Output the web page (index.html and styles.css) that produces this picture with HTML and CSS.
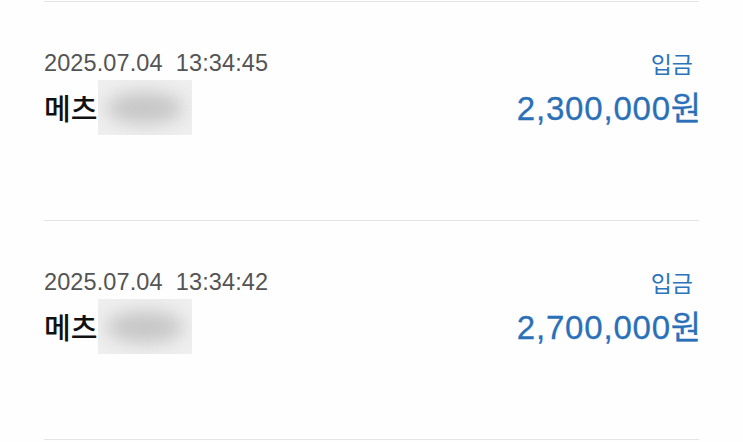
FILE: index.html
```html
<!DOCTYPE html>
<html lang="ko">
<head>
<meta charset="utf-8">
<link rel="stylesheet" href="styles.css">
</head>
<body>
<div class="list">
  <div class="row">
    <div class="left">
      <div class="date">2025.07.04&nbsp;&nbsp;13:34:45</div>
      <div class="name">메츠<span class="blur"><span class="blob"></span></span></div>
    </div>
    <div class="right">
      <div class="type">입금</div>
      <div class="amount">2,300,000원</div>
    </div>
  </div>
  <div class="row">
    <div class="left">
      <div class="date">2025.07.04&nbsp;&nbsp;13:34:42</div>
      <div class="name">메츠<span class="blur"><span class="blob"></span></span></div>
    </div>
    <div class="right">
      <div class="type">입금</div>
      <div class="amount">2,700,000원</div>
    </div>
  </div>
</div>
</body>
</html>
```
FILE: styles.css
```css
html, body {
  margin: 0;
  padding: 0;
  background: #fefefe;
}
body {
  font-family: "Liberation Sans", "Noto Sans CJK KR", sans-serif;
}
.list {
  margin: 1px 44px 0;
  border-top: 1px solid #e4e4e4;
}
.row {
  height: 218px;
  border-bottom: 1px solid #e4e4e4;
  display: flex;
  justify-content: space-between;
  align-items: flex-start;
}
.left, .right {
  padding-top: 47px;
}
.date {
  font-size: 23.5px;
  color: #545454;
  line-height: 28px;
  letter-spacing: 0.1px;
}
.name {
  display: flex;
  align-items: center;
  font-family: "Noto Sans CJK KR", sans-serif;
  font-size: 29px;
  font-weight: 500;
  color: #111;
  line-height: 55px;
  margin-top: 3px;
}
.blur {
  display: inline-block;
  width: 94px;
  height: 55px;
  margin-left: 1px;
  background: #efefef;
  position: relative;
  overflow: hidden;
}
.blob {
  position: absolute;
  left: 8px;
  top: 12px;
  width: 78px;
  height: 32px;
  border-radius: 50%;
  background: #c6c6c6;
  filter: blur(9px);
}
.right {
  text-align: right;
}
.type {
  font-family: "Noto Sans CJK KR", sans-serif;
  font-size: 23px;
  color: #2b74bc;
  line-height: 28px;
  padding-right: 6px;
}
.amount {
  font-size: 33px;
  color: #2a70b8;
  line-height: 46px;
  letter-spacing: 0.8px;
  margin-top: 9px;
  margin-right: -3px;
  -webkit-text-stroke: 0.3px #2a70b8;
}
```
